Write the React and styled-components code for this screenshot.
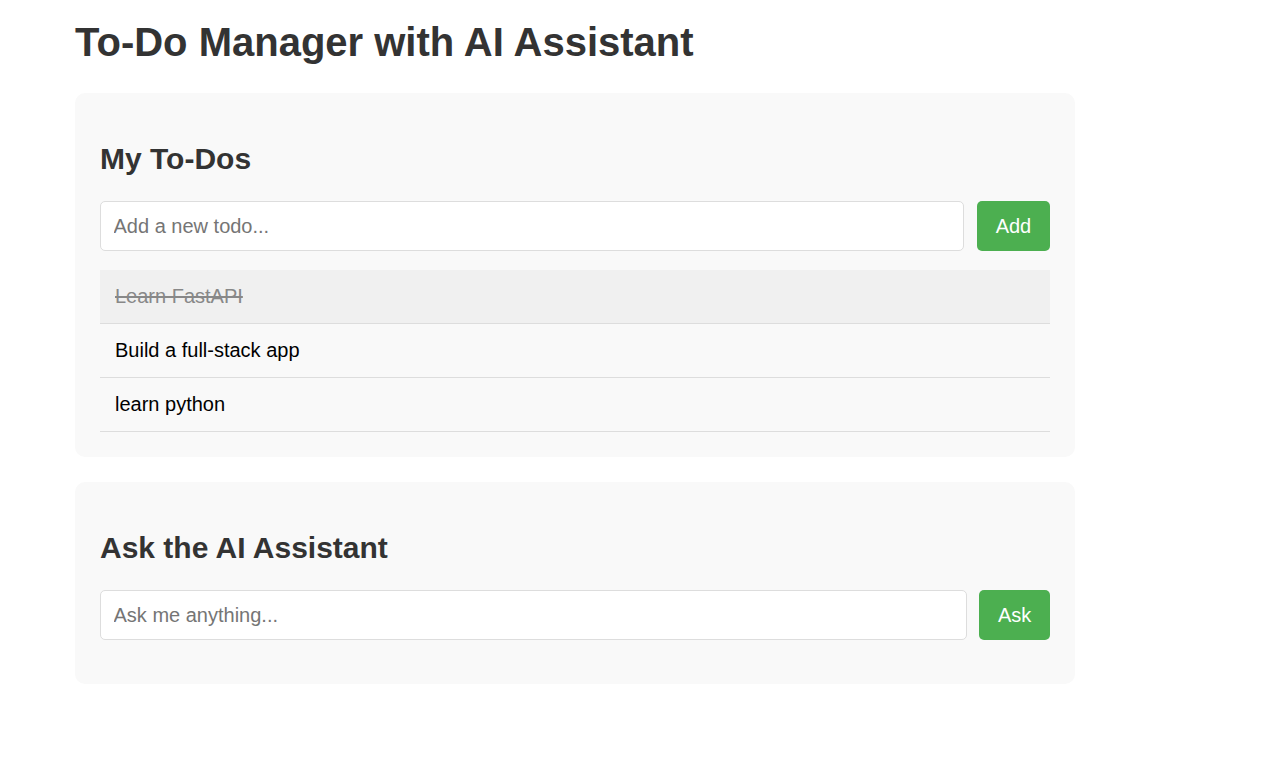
import React, { useState } from 'react';
import styled, { createGlobalStyle } from 'styled-components';

const GlobalStyle = createGlobalStyle`
    html, body {
        margin: 0;
        padding: 0;
        background: #ffffff;
    }
    body {
        font-family: "Liberation Sans", Arial, sans-serif;
        font-size: 20px;
    }
`;

const Page = styled.div`
    width: 1000px;
    padding: 20px 0 40px 75px;
`;

const Title = styled.h1`
    margin: 0 0 28px;
    font-size: 40px;
    font-weight: bold;
    color: #333;
    line-height: normal;
`;

const Card = styled.section`
    background: #f9f9f9;
    border-radius: 10px;
    padding: 25px;
    margin-bottom: 25px;
`;

const CardTitle = styled.h2`
    margin: 24px 0 25px;
    font-size: 30px;
    font-weight: bold;
    color: #333;
    line-height: normal;
`;

const Form = styled.form`
    display: flex;
    gap: 12.5px;
    margin-bottom: 19px;
`;

const Input = styled.input`
    flex: 1;
    box-sizing: border-box;
    height: 50px;
    padding: 0 12.5px;
    border: 1px solid #ddd;
    border-radius: 5px;
    background: #fff;
    font-family: inherit;
    font-size: 20px;
    color: #000;
    outline: none;

    &::placeholder {
        color: #757575;
    }
`;

const Button = styled.button`
    box-sizing: border-box;
    height: 50px;
    padding: 0 18.75px;
    border: none;
    border-radius: 5px;
    background: #4caf50;
    color: #fff;
    font-family: inherit;
    font-size: 20px;
    cursor: pointer;
`;

const List = styled.ul`
    list-style: none;
    margin: 0;
    padding: 0;
`;

const Item = styled.li`
    padding: 15px;
    line-height: 23px;
    border-bottom: 1px solid #ddd;
    background: ${(p) => (p.done ? '#f0f0f0' : 'transparent')};
    color: ${(p) => (p.done ? '#888' : '#000')};
    text-decoration: ${(p) => (p.done ? 'line-through' : 'none')};
    cursor: pointer;
`;

const initialTodos = [
    { id: 1, text: 'Learn FastAPI', done: true },
    { id: 2, text: 'Build a full-stack app', done: false },
    { id: 3, text: 'learn python', done: false },
];

export default function App() {
    const [todos, setTodos] = useState(initialTodos);
    const [draft, setDraft] = useState('');
    const [question, setQuestion] = useState('');

    const addTodo = (e) => {
        e.preventDefault();
        if (!draft.trim()) return;
        setTodos([...todos, { id: Date.now(), text: draft.trim(), done: false }]);
        setDraft('');
    };

    const toggle = (id) => {
        setTodos(todos.map((t) => (t.id === id ? { ...t, done: !t.done } : t)));
    };

    return (
        <>
            <GlobalStyle />
            <Page>
                <Title>To-Do Manager with AI Assistant</Title>

                <Card>
                    <CardTitle>My To-Dos</CardTitle>
                    <Form onSubmit={addTodo}>
                        <Input
                            placeholder="Add a new todo..."
                            value={draft}
                            onChange={(e) => setDraft(e.target.value)}
                        />
                        <Button type="submit">Add</Button>
                    </Form>
                    <List>
                        {todos.map((t) => (
                            <Item key={t.id} done={t.done} onClick={() => toggle(t.id)}>
                                {t.text}
                            </Item>
                        ))}
                    </List>
                </Card>

                <Card>
                    <CardTitle>Ask the AI Assistant</CardTitle>
                    <Form onSubmit={(e) => e.preventDefault()}>
                        <Input
                            placeholder="Ask me anything..."
                            value={question}
                            onChange={(e) => setQuestion(e.target.value)}
                        />
                        <Button type="submit">Ask</Button>
                    </Form>
                </Card>
            </Page>
        </>
    );
}
